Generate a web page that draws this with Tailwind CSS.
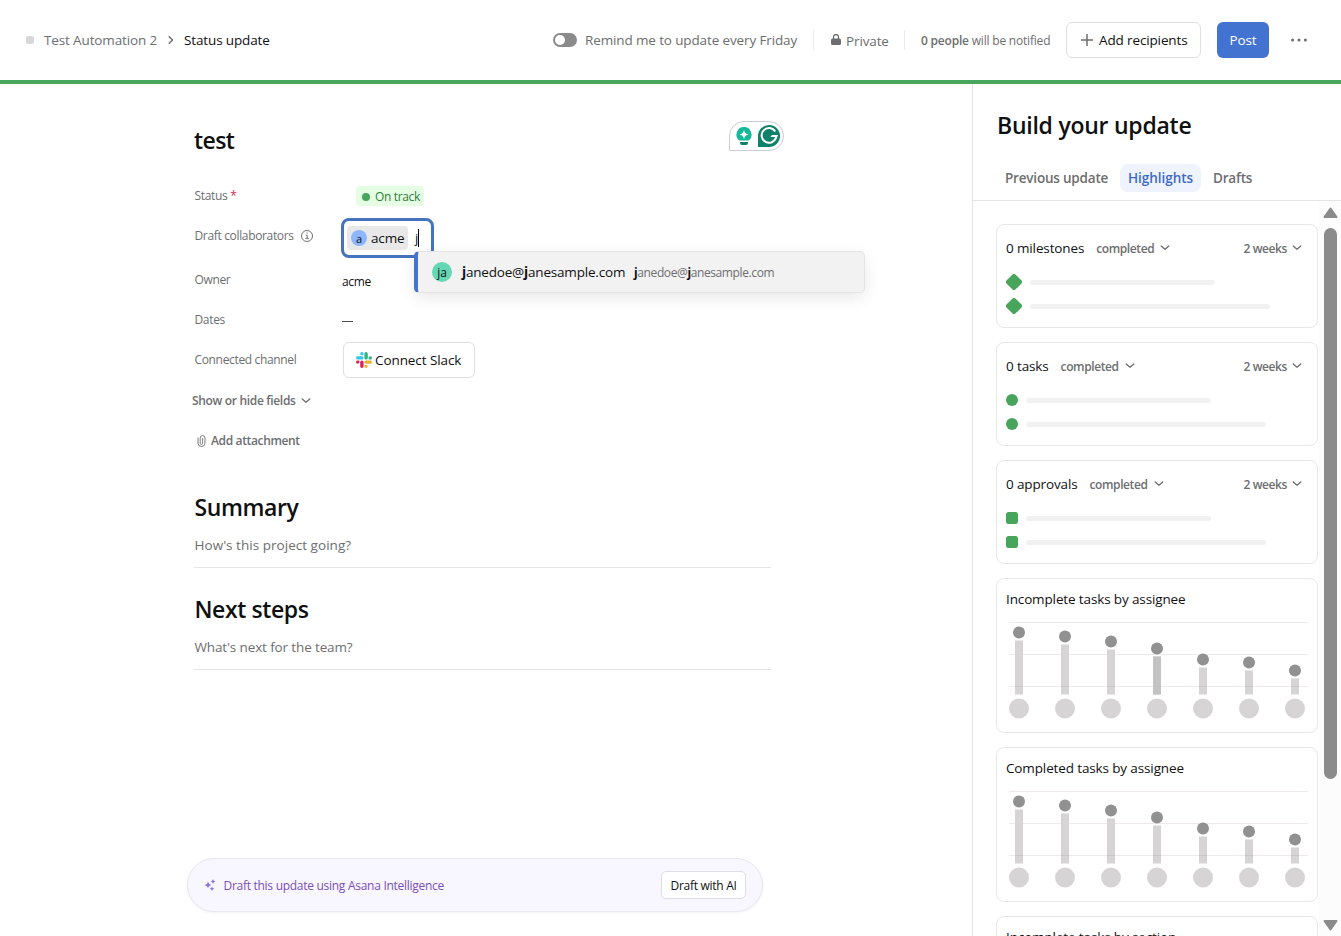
<!DOCTYPE html>
<html lang="en">
<head>
    <meta charset="UTF-8">
    <meta name="viewport" content="width=device-width, initial-scale=1.0">
    <title>Status update</title>
    <script src="https://cdn.jsdelivr.net/npm/@tailwindcss/browser@4"></script>
</head>
<body class="h-screen overflow-hidden bg-white font-['Open_Sans',sans-serif] text-[13.5px] leading-5 tracking-[-0.13px] whitespace-nowrap text-[#0f1012]">
    <!-- shared icons -->
    <svg class="hidden">
        <symbol id="chevron" viewBox="0 0 10 6">
            <path d="M1.200 1L5 4.200 8.800 1" fill="none" stroke="#6d6e6f" stroke-width="1.300" stroke-linecap="round" stroke-linejoin="round"/>
        </symbol>
        <symbol id="diamond" viewBox="0 0 16 16">
            <rect x="1.700" y="1.700" width="12.600" height="12.600" rx="2.300" transform="rotate(45 8 8)" fill="#48a55c"/>
        </symbol>
        <symbol id="lollipops" viewBox="0 0 302 100">
            <path d="M1 .5h299M1 32.5h299M1 64.5h299" stroke="#edeae9"/>
            <g fill="#d6d4d5">
                <path d="M7 18.500h8v54H7zM53 22.500h8v50h-8zM99 27.500h8v45h-8zM145 34.500h8v38h-8zM191 45.500h8v27h-8zM237 48.500h8v24h-8zM283 56.500h8v16h-8z"/>
                <circle cx="11" cy="86.500" r="10"/><circle cx="57" cy="86.500" r="10"/><circle cx="103" cy="86.500" r="10"/><circle cx="149" cy="86.500" r="10"/><circle cx="195" cy="86.500" r="10"/><circle cx="241" cy="86.500" r="10"/><circle cx="287" cy="86.500" r="10"/>
            </g>
            <path d="M7 64.500h8M53 64.500h8M99 64.500h8M145 64.500h8M191 64.500h8M237 64.500h8M283 64.500h8" stroke="#c9c7c7"/>
            <g fill="#929192">
                <circle cx="11" cy="10.500" r="6"/><circle cx="57" cy="14.500" r="6"/><circle cx="103" cy="19.500" r="6"/><circle cx="149" cy="26.500" r="6"/><circle cx="195" cy="37.500" r="6"/><circle cx="241" cy="40.500" r="6"/><circle cx="287" cy="48.500" r="6"/>
            </g>
        </symbol>
    </svg>

    <!-- top bar -->
    <header class="flex h-[84px] items-center justify-between border-b-4 border-[#48a55c] pr-[34px] pl-[26px]">
        <div class="flex items-center">
            <span class="size-2 rounded-[2px] bg-[#d8d8d8]"></span>
            <span class="ml-2.5 w-[113px] text-[#6d6e6f]">Test Automation 2</span>
            <svg class="ml-[11px] h-2.5 w-1.5" viewBox="0 0 6 10"><path d="M1.200 1.800L4.500 5 1.200 8.200" fill="none" stroke="#6d6e6f" stroke-width="1.500" stroke-linecap="round" stroke-linejoin="round"/></svg>
            <span class="ml-2.5">Status update</span>
        </div>
        <div class="flex items-center text-[#6d6e6f]">
            <span class="flex h-3.5 w-6 items-center rounded-full bg-[#8b8b8c] p-0.5"><span class="size-2.5 rounded-full bg-white"></span></span>
            <span class="ml-2 w-[213px]">Remind me to update every Friday</span>
            <span class="ml-[15px] h-5 w-px bg-[#edeae9]"></span>
            <svg class="ml-4 h-3 w-3" viewBox="0 0 12 12"><path d="M1 6a1.500 1.500 0 0 1 1.500-1.500h7A1.500 1.500 0 0 1 11 6v3.500A1.500 1.500 0 0 1 9.500 11h-7A1.500 1.500 0 0 1 1 9.500z" fill="#6d6e6f"/><path d="M3.500 5V3a2.500 2.500 0 0 1 5 0v2" fill="none" stroke="#6d6e6f" stroke-width="1.300"/></svg>
            <span class="ml-1 w-[43px] pt-px">Private</span>
            <span class="ml-[15px] h-5 w-px bg-[#edeae9]"></span>
            <span class="ml-4 w-[130px] pt-px text-[12px] tracking-[-0.2px]"><b class="font-semibold">0 people</b> will be notified</span>
            <button class="ml-[15px] flex h-9 w-[135px] items-center rounded-md border border-[#dfdfdf] pl-3.5 text-[#0f1012]">
                <svg class="mr-1.5 size-3" viewBox="0 0 12 12"><path d="M6 0v12M0 6h12" stroke="#6d6e6f" stroke-width="1.500"/></svg>
                Add recipients
            </button>
            <button class="ml-4 h-9 w-[52px] rounded-md bg-[#4273d1] text-white">Post</button>
            <svg class="ml-[22px] h-1 w-4" viewBox="0 0 16 4" fill="#6d6e6f"><circle cx="1.600" cy="2" r="1.500"/><circle cx="8" cy="2" r="1.500"/><circle cx="14.400" cy="2" r="1.500"/></svg>
        </div>
    </header>

    <div class="flex h-[852px]">
        <!-- update editor -->
        <main class="flex w-[972px] flex-col pl-[194px]">
            <div class="mt-[37px] flex h-[30px] w-[590px] items-center justify-between">
                <h1 class="pt-2 text-[23px] leading-8 font-semibold tracking-[-0.6px]">test</h1>
                <div class="flex h-[30px] w-[55px] items-center gap-1 rounded-full rounded-bl-none border border-[#c9cbd6] pl-1">
                    <svg class="h-5 w-5" viewBox="0 0 20 20"><path d="M10 1a7.500 7.500 0 0 1 4.500 13.500h-9A7.500 7.500 0 0 1 10 1z" fill="#15b99a"/><path d="M10 4q.8 3.700 4.500 4.500-3.700.8-4.500 4.500-.8-3.700-4.500-4.500Q9.200 7.700 10 4z" fill="#fff"/><path d="M6 16h8v1q0 2-2 2H8q-2 0-2-2z" fill="#0f806a"/></svg>
                    <svg class="h-[22px] w-[22px]" viewBox="0 0 24 24"><path d="M12 0a12 12 0 1 1 0 24H0V12A12 12 0 0 1 12 0z" fill="#0f806a"/><path d="M18.800 7.200A8 8 0 1 0 19.800 13" fill="none" stroke="#fff" stroke-width="2.200"/><path d="M15.200 11h6.600l-1.400 4-1.200-1.800H13.500z" fill="#fff"/></svg>
                </div>
            </div>

            <div class="mt-6 flex h-10 items-center text-[12px] tracking-[-0.34px]">
                <span class="w-[162px] pt-px pl-[0.5px] text-[#6d6e6f]">Status <span class="text-[#c92f54]">*</span></span>
                <span class="mt-0.5 flex h-5 w-[68px] items-center rounded-[4px] bg-[#e4fde3] pt-px pl-1.5 text-[#327e42]"><span class="mr-[5px] size-2 rounded-full bg-[#48a55c]"></span>On track</span>
            </div>

            <div class="flex h-11 items-center text-[12px] tracking-[-0.34px]">
                <span class="mb-0.5 flex w-[147px] items-center pl-[0.5px] text-[#6d6e6f]">Draft collaborators
                    <svg class="ml-[7px] size-3" viewBox="0 0 12 12" fill="none" stroke="#6d6e6f"><circle cx="6" cy="6" r="5.500"/><path d="M4.800 5.300h1.400v3.200M4.500 8.600h3.200"/><path d="M5.500 3h1.200" stroke-width="1.200"/></svg>
                </span>
                <div class="relative mt-0.5 flex h-10 w-[93px] items-center rounded-lg border-[3px] border-[#4573bd] pl-[3px] text-[13.5px] tracking-[-0.13px]">
                    <span class="flex h-6 w-[61px] items-center rounded-[4px] bg-[#e9e8e8] pl-1"><span class="mr-1 flex size-4 items-center justify-center rounded-full bg-[#8db6fb] pt-px text-[11px] leading-none">a</span>acme</span>
                    <span class="ml-[7px] w-[3px] text-[13px]">j</span>
                    <span class="h-[18px] w-px bg-black"></span>

                    <!-- people suggestion -->
                    <div class="absolute top-[30px] left-[70px] flex h-[42px] w-[451px] items-center rounded-[5px] border border-l-4 border-[#e4e4e5] border-l-[#4573d2] bg-[#f2f2f2] pl-3.5 shadow-[0_5px_16px_rgba(0,0,0,0.09)]">
                        <span class="flex size-5 items-center justify-center rounded-full bg-[#66d7b5] pt-px text-[12px] leading-none">ja</span>
                        <span class="ml-2.5 w-[164px] tracking-[-0.19px]"><b>j</b>anedoe@<b>j</b>anesample.com</span>
                        <span class="ml-2 pt-px text-[12px] tracking-[-0.39px] text-[#6d6e6f]"><b class="text-[#0f1012]">j</b>anedoe@<b class="text-[#0f1012]">j</b>anesample.com</span>
                    </div>
                </div>
            </div>

            <div class="flex h-10 items-center text-[12px] tracking-[-0.34px]">
                <span class="w-[148px] pt-px pl-[0.5px] text-[#6d6e6f]">Owner</span>
                <span class="pt-1.5">acme</span>
            </div>
            <div class="flex h-10 items-center text-[12px] tracking-[-0.34px]">
                <span class="w-[148px] pt-px pl-[0.5px] text-[#6d6e6f]">Dates</span>
                <span class="mt-1 h-px w-[11px] bg-[#4b4c4d]"></span>
            </div>
            <div class="flex h-10 items-center text-[12px] tracking-[-0.34px]">
                <span class="w-[149px] pt-px pl-[0.5px] text-[#6d6e6f]">Connected channel</span>
                <button class="mt-0.5 flex h-9 w-[132px] items-center rounded-md border border-[#dfdfdf] pl-3 text-[13.5px] tracking-[-0.08px]">
                    <svg class="mr-[3px] size-4" viewBox="0 0 24 24">
                        <path d="M5.042 15.165a2.528 2.528 0 0 1-2.520 2.523A2.528 2.528 0 0 1 0 15.165a2.527 2.527 0 0 1 2.522-2.520h2.520zM6.313 15.165a2.527 2.527 0 0 1 5.042 0v6.313a2.521 2.521 0 0 1-5.042 0z" fill="#e01e5a"/>
                        <path d="M8.834 5.042a2.528 2.528 0 0 1-2.521-2.520 2.521 2.521 0 0 1 5.042 0v2.520zM8.834 6.313a2.521 2.521 0 0 1 0 5.042H2.522a2.521 2.521 0 0 1 0-5.042z" fill="#36c5f0"/>
                        <path d="M18.956 8.834a2.522 2.522 0 1 1 2.522 2.521h-2.522zM17.688 8.834a2.522 2.522 0 0 1-5.043 0V2.522a2.522 2.522 0 0 1 5.043 0z" fill="#2eb67d"/>
                        <path d="M15.165 18.956a2.522 2.522 0 1 1-2.520 2.522v-2.522zM15.165 17.688a2.522 2.522 0 0 1 0-5.043h6.313a2.522 2.522 0 0 1 0 5.043z" fill="#ecb22e"/>
                    </svg>
                    Connect Slack
                </button>
            </div>
            <div class="-ml-0.5 flex h-10 items-center pt-1 text-[12px] font-semibold tracking-[-0.33px] text-[#6d6e6f]">
                Show or hide fields
                <svg class="ml-[5px] h-1.5 w-2.5"><use href="#chevron"/></svg>
            </div>
            <div class="ml-[3px] flex h-10 items-center pt-1 text-[12px] font-semibold tracking-[-0.36px] text-[#6d6e6f]">
                <svg class="mr-[5px] h-3 w-[9px]" viewBox="0 0 9 12"><path d="M1 3v5.200a3.500 3.300 0 0 0 7 0V3A2.400 2.400 0 0 0 3.200 3v5.200a1.200 1.200 0 0 0 2.400 0V3.500" fill="none" stroke="#6d6e6f" stroke-width=".9" stroke-linecap="round"/></svg>
                Add attachment
            </div>

            <section class="mt-8 h-[102px]">
                <h2 class="pl-[0.5px] text-[23px] leading-8 font-semibold tracking-[-0.4px]">Summary</h2>
                <p class="mt-3 h-[33px] w-[577px] border-b border-[#e6e4e3] pl-[0.5px] tracking-[0.03px] text-[#6d6e6f]">How's this project going?</p>
            </section>
            <section class="h-[102px]">
                <h2 class="pl-[0.5px] text-[23px] leading-8 font-semibold tracking-[-0.4px]">Next steps</h2>
                <p class="mt-3 h-[33px] w-[577px] border-b border-[#e6e4e3] pl-[0.5px] text-[#6d6e6f]">What's next for the team?</p>
            </section>

            <div class="mt-auto mb-6 -ml-[7px] flex h-[54px] w-[576px] items-center rounded-full border border-[#e8e6f0] bg-[#f8f6ff] pr-4 pl-4 text-[12px] tracking-[-0.28px] text-[#7a4fba] shadow-[0_1px_3px_rgba(0,0,0,0.05)]">
                <svg class="h-3 w-3" viewBox="0 0 12 12" fill="#8b72dd"><path d="M4 2.500q.5 3 3.500 3.500-3 .5-3.500 3.500Q3.500 6.500.5 6 3.500 5.500 4 2.500zM9 0q.3 2.200 2.500 2.500Q9.300 2.800 9 5 8.700 2.800 6.500 2.500 8.700 2.200 9 0zM8 7.500q.3 2 2.300 2.300Q8.300 10 8 12q-.3-2-2.300-2.200Q7.700 9.500 8 7.500z"/></svg>
                <span class="ml-[7.5px] pt-px">Draft this update using Asana Intelligence</span>
                <button class="ml-auto h-7 w-[85px] rounded-[5px] border border-[#dfdde6] bg-white pt-px text-[#0f1012]">Draft with AI</button>
            </div>
        </main>

        <!-- highlights panel -->
        <aside class="flex w-[369px] flex-col border-l border-[#e6e4e3]">
            <h2 class="mt-[25px] ml-6 text-[23px] leading-8 font-semibold tracking-[-0.25px]">Build your update</h2>
            <nav class="flex h-[60px] items-center border-b border-[#e6e4e3] pt-[15px] pl-6 font-semibold tracking-[-0.2px] text-[#6d6e6f]">
                <a class="w-[123px] pl-2">Previous update</a>
                <a class="flex h-7 w-[81px] items-center justify-center rounded-lg bg-[#eff3fd] tracking-[-0.05px] text-[#3f6ac4]">Highlights</a>
                <a class="pl-3">Drafts</a>
            </nav>
            <div class="flex h-[735px]">
                <div class="flex w-[346px] flex-col gap-3.5 overflow-hidden pt-[23px] pl-[23px]">
                    <div class="h-[104px] w-[322px] shrink-0 rounded-lg border border-[#e9e7e6] px-[9px] pt-[13px]">
                        <div class="flex h-5 items-center">
                            <span>0 milestones</span>
                            <span class="ml-3 pt-px text-[12px] font-semibold tracking-[-0.4px] text-[#6d6e6f]">completed</span>
                            <svg class="ml-1.5 h-1.5 w-2.5"><use href="#chevron"/></svg>
                            <span class="ml-auto pt-px text-[12px] font-semibold tracking-[-0.4px] text-[#6d6e6f]">2 weeks</span>
                            <svg class="mr-1.5 ml-[5px] h-1.5 w-2.5"><use href="#chevron"/></svg>
                        </div>
                        <div class="mt-4 flex items-center gap-2"><svg class="size-4"><use href="#diamond"/></svg><span class="h-[5px] w-[185px] rounded-full bg-[#f1f1f1]"></span></div>
                        <div class="mt-2 flex items-center gap-2"><svg class="size-4"><use href="#diamond"/></svg><span class="h-[5px] w-[240px] rounded-full bg-[#f1f1f1]"></span></div>
                    </div>

                    <div class="h-[104px] w-[322px] shrink-0 rounded-lg border border-[#e9e7e6] px-[9px] pt-[13px]">
                        <div class="flex h-5 items-center">
                            <span>0 tasks</span>
                            <span class="ml-3 pt-px text-[12px] font-semibold tracking-[-0.4px] text-[#6d6e6f]">completed</span>
                            <svg class="ml-1.5 h-1.5 w-2.5"><use href="#chevron"/></svg>
                            <span class="ml-auto pt-px text-[12px] font-semibold tracking-[-0.4px] text-[#6d6e6f]">2 weeks</span>
                            <svg class="mr-1.5 ml-[5px] h-1.5 w-2.5"><use href="#chevron"/></svg>
                        </div>
                        <div class="mt-[18px] flex items-center gap-2"><span class="size-3 rounded-full bg-[#48a55c]"></span><span class="h-[5px] w-[185px] rounded-full bg-[#f1f1f1]"></span></div>
                        <div class="mt-3 flex items-center gap-2"><span class="size-3 rounded-full bg-[#48a55c]"></span><span class="h-[5px] w-[240px] rounded-full bg-[#f1f1f1]"></span></div>
                    </div>

                    <div class="h-[104px] w-[322px] shrink-0 rounded-lg border border-[#e9e7e6] px-[9px] pt-[13px]">
                        <div class="flex h-5 items-center">
                            <span>0 approvals</span>
                            <span class="ml-3 pt-px text-[12px] font-semibold tracking-[-0.4px] text-[#6d6e6f]">completed</span>
                            <svg class="ml-1.5 h-1.5 w-2.5"><use href="#chevron"/></svg>
                            <span class="ml-auto pt-px text-[12px] font-semibold tracking-[-0.4px] text-[#6d6e6f]">2 weeks</span>
                            <svg class="mr-1.5 ml-[5px] h-1.5 w-2.5"><use href="#chevron"/></svg>
                        </div>
                        <div class="mt-[18px] flex items-center gap-2"><span class="size-3 rounded-[2.5px] bg-[#48a55c]"></span><span class="h-[5px] w-[185px] rounded-full bg-[#f1f1f1]"></span></div>
                        <div class="mt-3 flex items-center gap-2"><span class="size-3 rounded-[2.5px] bg-[#48a55c]"></span><span class="h-[5px] w-[240px] rounded-full bg-[#f1f1f1]"></span></div>
                    </div>

                    <div class="h-[155px] w-[322px] shrink-0 rounded-lg border border-[#e9e7e6] px-[9px] pt-[10px]">
                        <h3>Incomplete tasks by assignee</h3>
                        <svg class="mt-[13px] ml-[2px] h-[100px] w-[302px]" viewBox="0 0 302 100">
                            <use href="#lollipops" width="302" height="100"/>
                            <rect x="145" y="34.500" width="8" height="38" fill="#c4c3c3"/>
                        </svg>
                    </div>

                    <div class="h-[155px] w-[322px] shrink-0 rounded-lg border border-[#e9e7e6] px-[9px] pt-[10px]">
                        <h3>Completed tasks by assignee</h3>
                        <svg class="mt-[13px] ml-[2px] h-[100px] w-[302px]" viewBox="0 0 302 100">
                            <use href="#lollipops" width="302" height="100"/>
                        </svg>
                    </div>

                    <div class="h-[155px] w-[322px] shrink-0 rounded-lg border border-[#e9e7e6] px-[9px] pt-[10px]">
                        <h3>Incomplete tasks by section</h3>
                    </div>
                </div>

                <!-- scrollbar -->
                <div class="flex w-[22px] flex-col items-center bg-[#fcfcfc] pt-1.5 pb-[5px]">
                    <svg class="h-[11px] w-[15px] shrink-0" viewBox="0 0 15 11"><path d="M7.500 1.500L13.500 10h-12z" fill="#8b8b8b" stroke="#8b8b8b" stroke-width="2" stroke-linejoin="round"/></svg>
                    <div class="mt-2.5 h-[551px] w-[13px] shrink-0 rounded-full bg-[#8b8b8b]"></div>
                    <svg class="mt-auto h-[11px] w-[15px] shrink-0" viewBox="0 0 15 11"><path d="M7.500 9.500L13.500 1h-12z" fill="#8b8b8b" stroke="#8b8b8b" stroke-width="2" stroke-linejoin="round"/></svg>
                </div>
            </div>
        </aside>
    </div>
</body>
</html>
